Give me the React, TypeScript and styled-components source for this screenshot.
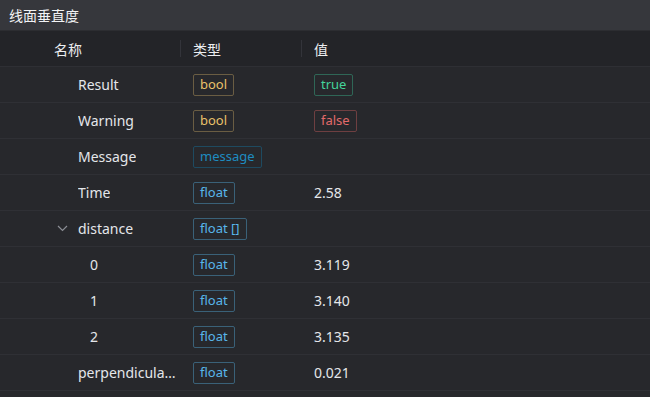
import React from "react";
import styled, { createGlobalStyle } from "styled-components";

const Global = createGlobalStyle`
  html, body { margin: 0; padding: 0; background: #27282c; }
  body { font-family: "Segoe UI", "Noto Sans", "Noto Sans CJK SC", sans-serif; }
`;

const Panel = styled.div`
  width: 650px;
  height: 397px;
  background: #27282c;
  display: flex;
  flex-direction: column;
  overflow: hidden;
  color: #e6e8ec;
`;

const TitleBar = styled.div`
  height: 30px;
  flex: none;
  background: #36373c;
  border-bottom: 1px solid #2c2d31;
  display: flex;
  align-items: center;
  padding-left: 9px;
  font-size: 14px;
  color: #f2f3f5;
  font-family: "Noto Sans CJK SC", sans-serif;
`;

const Grid = styled.div`
  display: grid;
  grid-template-columns: 180px 121px 1fr;
`;

const HeaderRow = styled(Grid)`
  height: 35px;
  background: #232428;
  border-bottom: 1px solid #2e2f34;
  font-family: "Noto Sans CJK SC", sans-serif;
  font-size: 14px;
  color: #eceef1;
`;

const HeadCell = styled.div<{ $pad: number; $sep?: boolean }>`
  display: flex;
  align-items: center;
  padding-left: ${(p) => p.$pad}px;
  position: relative;
  ${(p) =>
    p.$sep
      ? `&::before { content: ""; position: absolute; left: 0; top: 9px; height: 17px; width: 1px; background: #33343a; }`
      : ""}
`;

const Row = styled(Grid)`
  height: 35px;
  border-bottom: 1px solid #2f3035;
  font-size: 14px;
`;

const NameCell = styled.div<{ $indent: number }>`
  display: flex;
  align-items: center;
  padding-left: ${(p) => p.$indent}px;
  color: #e4e6ea;
  white-space: nowrap;
  overflow: hidden;
  min-width: 0;
`;

const NameText = styled.span`
  overflow: hidden;
  text-overflow: ellipsis;
  white-space: nowrap;
  max-width: 98px;
`;

const Chevron = styled.span`
  display: inline-flex;
  flex: none;
  width: 24px;
  margin-left: -24px;
  padding-left: 3px;
  box-sizing: border-box;
  color: #8b8e95;
`;

const Cell = styled.div`
  display: flex;
  align-items: center;
  padding-left: 13px;
  color: #e4e6ea;
`;

const tagColors: Record<string, [string, string]> = {
  bool: ["#e9c16a", "#6a5d43"],
  true: ["#45d49b", "#2f6656"],
  false: ["#e26a6a", "#6e3f41"],
  message: ["#1e8cc0", "#1e4a60"],
  float: ["#58b6ea", "#3a6178"],
};

const Tag = styled.span<{ $kind: string }>`
  display: inline-flex;
  align-items: center;
  height: 20px;
  padding: 0 6px;
  border: 1px solid ${(p) => tagColors[p.$kind][1]};
  border-radius: 2px;
  font-size: 13px;
  color: ${(p) => tagColors[p.$kind][0]};
  line-height: 1;
`;

type RowData = {
  name: string;
  indent: number;
  type: string;
  typeKind: string;
  value?: string;
  valueKind?: string;
  expand?: boolean;
};

const rows: RowData[] = [
  { name: "Result", indent: 78, type: "bool", typeKind: "bool", value: "true", valueKind: "true" },
  { name: "Warning", indent: 78, type: "bool", typeKind: "bool", value: "false", valueKind: "false" },
  { name: "Message", indent: 78, type: "message", typeKind: "message" },
  { name: "Time", indent: 78, type: "float", typeKind: "float", value: "2.58" },
  { name: "distance", indent: 78, type: "float []", typeKind: "float", expand: true },
  { name: "0", indent: 90, type: "float", typeKind: "float", value: "3.119" },
  { name: "1", indent: 90, type: "float", typeKind: "float", value: "3.140" },
  { name: "2", indent: 90, type: "float", typeKind: "float", value: "3.135" },
  { name: "perpendicularity", indent: 78, type: "float", typeKind: "float", value: "0.021" },
];

export default function App() {
  return (
    <>
      <Global />
      <Panel>
        <TitleBar>线面垂直度</TitleBar>
        <HeaderRow>
          <HeadCell $pad={54}>名称</HeadCell>
          <HeadCell $pad={13} $sep>类型</HeadCell>
          <HeadCell $pad={13} $sep>值</HeadCell>
        </HeaderRow>
        {rows.map((r) => (
          <Row key={r.name}>
            <NameCell $indent={r.indent}>
              {r.expand && (
                <Chevron>
                  <svg width="11" height="7" viewBox="0 0 11 7">
                    <path d="M1 1 L5.5 5.5 L10 1" fill="none" stroke="currentColor" strokeWidth="1.2" />
                  </svg>
                </Chevron>
              )}
              <NameText>{r.name}</NameText>
            </NameCell>
            <Cell>
              <Tag $kind={r.typeKind}>{r.type}</Tag>
            </Cell>
            <Cell>
              {r.value && r.valueKind ? (
                <Tag $kind={r.valueKind}>{r.value}</Tag>
              ) : (
                r.value
              )}
            </Cell>
          </Row>
        ))}
      </Panel>
    </>
  );
}
